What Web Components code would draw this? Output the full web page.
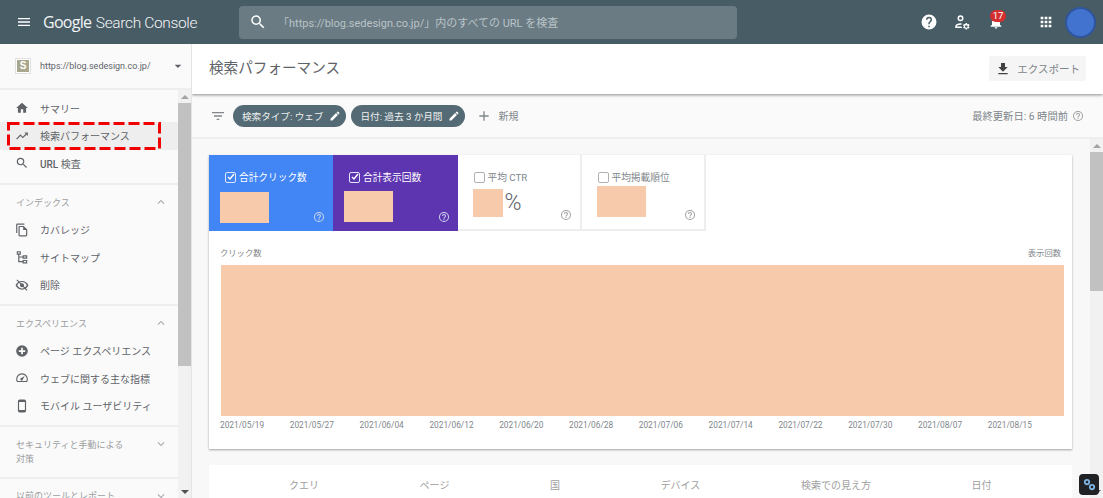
<!DOCTYPE html>
<html lang="ja">
<head>
<meta charset="utf-8">
<title>検索パフォーマンス</title>
<style>
html, body { margin: 0; height: 100%; overflow: hidden; }
body { font-family: Roboto, "Noto Sans CJK JP", sans-serif; color: #5f6368; }
</style>
</head>
<body>
<gsc-app></gsc-app>

<script>
const FONT = 'Roboto, "Noto Sans CJK JP", sans-serif';

const ICONS = {
  menu: '<path d="M3 18h18v-2H3v2zm0-5h18v-2H3v2zm0-7v2h18V6H3z"/>',
  search: '<path d="M15.5 14h-.79l-.28-.27A6.47 6.47 0 0 0 16 9.5 6.5 6.5 0 1 0 9.5 16c1.61 0 3.09-.59 4.23-1.57l.27.28v.79l5 4.99L20.49 19l-4.99-5zm-6 0C7.01 14 5 11.99 5 9.5S7.01 5 9.5 5 14 7.01 14 9.5 11.99 14 9.5 14z"/>',
  help: '<path d="M12 2a10 10 0 1 0 0 20 10 10 0 0 0 0-20zm1 17h-2v-2h2v2zm2.07-7.75-.9.92C13.45 12.9 13 13.5 13 15h-2v-.5c0-1.1.45-2.1 1.17-2.83l1.24-1.26c.37-.36.59-.86.59-1.41a2 2 0 0 0-4 0H8a4 4 0 0 1 8 0c0 .88-.36 1.68-.93 2.25z"/>',
  helpOutline: '<path d="M11 18h2v-2h-2v2zm1-16a10 10 0 1 0 0 20 10 10 0 0 0 0-20zm0 18a8 8 0 1 1 0-16 8 8 0 0 1 0 16zm0-14a4 4 0 0 0-4 4h2a2 2 0 0 1 4 0c0 2-3 1.75-3 5h2c0-2.25 3-2.5 3-5a4 4 0 0 0-4-4z"/>',
  bell: '<path d="M12 22a2 2 0 0 0 2-2h-4a2 2 0 0 0 2 2zm6-6v-5c0-3.07-1.63-5.64-4.5-6.32V4a1.5 1.5 0 0 0-3 0v.68C7.64 5.36 6 7.92 6 11v5l-2 2v1h16v-1l-2-2z"/>',
  apps: '<path d="M4 8h4V4H4v4zm6 12h4v-4h-4v4zm-6 0h4v-4H4v4zm0-6h4v-4H4v4zm6 0h4v-4h-4v4zm6-10v4h4V4h-4zm-6 4h4V4h-4v4zm6 6h4v-4h-4v4zm0 6h4v-4h-4v4z"/>',
  home: '<path d="M10 20v-6h4v6h5v-8h3L12 3 2 12h3v8z"/>',
  trend: '<path d="M16 6l2.29 2.29-4.88 4.88-4-4L2 16.59 3.41 18l6-6 4 4 6.3-6.29L22 12V6z"/>',
  copy: '<path d="M16 1H4a2 2 0 0 0-2 2v14h2V3h12V1zm-1 4H8a2 2 0 0 0-2 2v14c0 1.1.9 2 2 2h11a2 2 0 0 0 2-2V11l-6-6zM8 21V7h6v5h5v9H8z"/>',
  sitemap: '<path d="M3 2h7v6H7.5v3H13V9h8v6h-8v-2H7.5v6H13v-2h8v6h-8v-2H5.5V8H3V2zm2 2v2h3V4H5zm10 7v2h4v-2h-4zm0 8v2h4v-2h-4z"/>',
  eyeOff: '<path d="M12 5C7 5 2.7 8.1 1 12.5 2.7 16.9 7 20 12 20s9.3-3.1 11-7.500C21.300 8.100 17 5 12 5zm0 13c-3.400 0-6.500-2.100-8.200-5.500C5.500 9.100 8.600 7 12 7s6.500 2.100 8.200 5.500C18.500 15.900 15.400 18 12 18zm0-9a3.500 3.500 0 1 0 0 7 3.500 3.500 0 0 0 0-7z"/><path d="M4 2.600 2.600 4l17.400 18 1.400-1.400z"/>',
  plusCircle: '<path fill-rule="evenodd" d="M12 2a10 10 0 1 0 0 20 10 10 0 0 0 0-20zm1.5 4.5h-3v4h-4v3h4v4h3v-4h4v-3h-4v-4z"/>',
  gauge: '<path d="M12 4a10 10 0 0 0-8.66 15h17.32A10 10 0 0 0 12 4zm7.46 13H4.54A8 8 0 0 1 12 6a8 8 0 0 1 7.46 11zM16.5 8.5l-5.6 3.7a2 2 0 1 0 2.2 2.9l3.4-6.6z"/>',
  phone: '<path d="M16 1H8a3 3 0 0 0-3 3v16a3 3 0 0 0 3 3h8a3 3 0 0 0 3-3V4a3 3 0 0 0-3-3zm1 18H7V5h10v14z"/>',
  up: '<path d="M7.41 15.41 12 10.83l4.59 4.58L18 14l-6-6-6 6z"/>',
  down: '<path d="M7.41 8.59 12 13.17l4.59-4.58L18 10l-6 6-6-6z"/>',
  caret: '<path d="M7 10l5 5 5-5z"/>',
  download: '<path d="M19 9h-4V3H9v6H5l7 7 7-7zM5 18v2h14v-2H5z"/>',
  filter: '<path d="M10 18h4v-2h-4v2zM3 6v2h18V6H3zm3 7h12v-2H6v2z"/>',
  pencil: '<path d="M3 17.25V21h3.75L17.81 9.94l-3.75-3.75L3 17.25zM20.71 7.04a1 1 0 0 0 0-1.41l-2.34-2.34a1 1 0 0 0-1.41 0l-1.83 1.83 3.75 3.75 1.83-1.83z"/>',
  plus: '<path d="M19 13h-6v6h-2v-6H5v-2h6V5h2v6h6v2z"/>',
  admin: '<path d="M10 3a4 4 0 1 0 0 8 4 4 0 0 0 0-8zm0 6a2 2 0 1 1 0-4 2 2 0 0 1 0 4zM3 19v-1c0-2.6 4-4.2 7-4.2.5 0 1 .05 1.6.12l-.5 1.96c-.4-.05-.75-.08-1.1-.08-2.4 0-5 1.15-5 2.2h6.4l.6 2H3zm15.8-5.4a.4.4 0 0 0-.4-.35h-1.3a.4.4 0 0 0-.4.35l-.15 1a4 4 0 0 0-.9.52l-.95-.38a.4.4 0 0 0-.48.17l-.65 1.13a.4.4 0 0 0 .1.5l.8.63a3 3 0 0 0 0 1.04l-.8.63a.4.4 0 0 0-.1.5l.65 1.13c.1.17.3.24.48.17l.95-.38c.28.2.58.38.9.52l.15 1c.03.2.2.35.4.35h1.3c.2 0 .37-.15.4-.35l.15-1a4 4 0 0 0 .9-.52l.95.38c.18.07.38 0 .48-.17l.65-1.13a.4.4 0 0 0-.1-.5l-.8-.63a3 3 0 0 0 0-1.04l.8-.63a.4.4 0 0 0 .1-.5l-.65-1.13a.4.4 0 0 0-.48-.17l-.95.38a4 4 0 0 0-.9-.52l-.15-1zm-1.05 6.15a1.75 1.75 0 1 1 0-3.5 1.75 1.75 0 0 1 0 3.5z"/>',
  link: '<path fill-rule="evenodd" d="M8 3a5 5 0 1 0 0 10 5 5 0 0 0 0-10zm0 3a2 2 0 1 1 0 4 2 2 0 0 1 0-4zm8 5a5 5 0 1 0 0 10 5 5 0 0 0 0-10zm0 3a2 2 0 1 1 0 4 2 2 0 0 1 0-4z"/>'
};

function icon(name, size, color) {
  return `<svg width="${size}" height="${size}" viewBox="0 0 24 24" fill="${color || 'currentColor'}" style="display:block;flex:none">${ICONS[name]}</svg>`;
}

class GscIcon extends HTMLElement {
  connectedCallback() {
    const root = this.attachShadow({mode: 'open'});
    const size = this.getAttribute('size') || 24;
    root.innerHTML = `<style>:host { display: block; flex: none; line-height: 0; }</style>` + icon(this.getAttribute('name'), size, this.getAttribute('color'));
  }
}
customElements.define('gsc-icon', GscIcon);

class GscHeader extends HTMLElement {
  constructor() {
    super();
    this.attachShadow({mode: 'open'}).innerHTML = `
    <style>
    :host { display: flex; align-items: center; height: 44px; background: #485c66; color: #fff; flex: none; position: relative; z-index: 3; font-family: ${FONT}; }
    .menu { margin-left: 16px; }
    .logo { margin-left: 11px; width: 172px; flex: none; font-family: Roboto, sans-serif; font-weight: 300; font-size: 15.5px; letter-spacing: -.35px; color: #f2f4f5; white-space: nowrap; }
    .logo b { font-family: "Open Sans", sans-serif; font-weight: 400; font-size: 16px; letter-spacing: -.7px; margin-right: 1px; }
    .search { margin-left: 24px; width: 498px; height: 33px; border-radius: 4px; background: #6b7b83; display: flex; align-items: center; padding-left: 10px; box-sizing: border-box; flex: none; }
    .search span { margin-left: 11px; font-size: 11px; color: #b9c3c8; white-space: nowrap; }
    .right { margin-left: auto; display: flex; align-items: center; height: 100%; }
    .bell { position: relative; margin-left: 17px; }
    .badge { position: absolute; left: 2px; top: -4px; width: 16px; height: 12px; border-radius: 6px; background: #d32f2f; font-size: 9.5px; line-height: 12px; text-align: center; }
    .avatar { width: 31px; height: 31px; box-sizing: border-box; border: 2px solid #2f559f; border-radius: 50%; background: #4274cf; margin: 0 7px 0 11px; }
    </style>
    <gsc-icon class="menu" name="menu" size="16"></gsc-icon>
    <div class="logo"><b>Google</b> Search Console</div>
    <div class="search"><gsc-icon name="search" size="18" color="#fff"></gsc-icon><span>「https://blog.sedesign.co.jp/」内のすべての URL を検査</span></div>
    <div class="right">
      <gsc-icon name="help" size="18"></gsc-icon>
      <gsc-icon name="admin" size="18" style="margin-left:15px"></gsc-icon>
      <div class="bell"><gsc-icon name="bell" size="16"></gsc-icon><div class="badge">17</div></div>
      <gsc-icon name="apps" size="16" style="margin-left:34px"></gsc-icon>
      <div class="avatar"></div>
    </div>`;
  }
}
customElements.define('gsc-header', GscHeader);

class GscNavItem extends HTMLElement {
  connectedCallback() {
    const root = this.attachShadow({mode: 'open'});
    root.innerHTML = `
    <style>
    :host { display: flex; align-items: center; height: 27.5px; padding-left: 15px; font-size: 10px; color: #5f6368; white-space: nowrap; }
    :host([active]) { background: #eeeeee; }
    span { margin-left: 11px; }
    </style>
    <gsc-icon name="${this.getAttribute('icon')}" size="14"></gsc-icon><span><slot></slot></span>`;
  }
}
customElements.define('gsc-nav-item', GscNavItem);

class GscNavGroup extends HTMLElement {
  connectedCallback() {
    const root = this.attachShadow({mode: 'open'});
    const open = this.hasAttribute('open');
    root.innerHTML = `
    <style>
    :host { display: block; border-top: 2px solid #eeeeee; }
    :host([open]) { padding-bottom: 5.5px; }
    .head { display: flex; justify-content: space-between; align-items: flex-start; padding: 10px 10px 0 16px; font-size: 9px; line-height: 14px; color: #9a9da0; box-sizing: border-box; }
    .head.open { height: 31px; }
    .head.closed { padding-bottom: 11px; }
    .head div { width: 112px; padding-top: .5px; }
    </style>
    <div class="head ${open ? 'open' : 'closed'}"><div>${this.getAttribute('label')}</div><gsc-icon name="${open ? 'up' : 'down'}" size="14" color="#a8abae"></gsc-icon></div>
    <slot></slot>`;
  }
}
customElements.define('gsc-nav-group', GscNavGroup);

class GscScrollbar extends HTMLElement {
  connectedCallback() {
    const root = this.attachShadow({mode: 'open'});
    root.innerHTML = `
    <style>
    :host { display: flex; flex-direction: column; width: 13px; flex: none; background: #f1f1f1; }
    .arrow { height: 13px; flex: none; display: flex; align-items: center; justify-content: center; }
    .arrow i { display: block; width: 0; height: 0; border-left: 4px solid transparent; border-right: 4px solid transparent; }
    .up i { border-bottom: 4px solid #a3a3a3; }
    .down i { border-top: 4px solid #505050; }
    .thumb { height: ${this.getAttribute('thumb-height')}px; background: #c1c1c1; flex: none; }
    .track { flex: 1; }
    </style>
    <div class="arrow up"><i></i></div><div class="thumb"></div><div class="track"></div><div class="arrow down"><i></i></div>`;
  }
}
customElements.define('gsc-scrollbar', GscScrollbar);

class GscSidebar extends HTMLElement {
  constructor() {
    super();
    this.attachShadow({mode: 'open'}).innerHTML = `
    <style>
    :host { display: flex; flex-direction: column; width: 192px; flex: none; background: #fafafa; border-right: 1px solid #e4e4e4; box-sizing: border-box; font-family: ${FONT}; position: relative; z-index: 2; }
    .prop { display: flex; align-items: center; height: 44px; flex: none; padding: 0 5px 0 15px; border-bottom: 2px solid #eeeeee; font-size: 9px; color: #5f6368; }
    .fav { width: 16px; height: 16px; border: 1px solid #e0e0e0; background: #fff; display: flex; align-items: center; justify-content: center; flex: none; box-sizing: border-box; }
    .fav i { display: block; width: 12px; height: 12px; background: #a9a78d; color: #fff; font: 700 10px/12px "Liberation Sans", sans-serif; text-align: center; }
    .url { margin-left: 9px; }
    .caret { margin-left: auto; }
    .body { flex: 1; display: flex; min-height: 0; }
    .list { flex: 1; min-width: 0; overflow: hidden; padding-top: 4.5px; }
    .first { padding-bottom: 6px; }
    </style>
    <div class="prop">
      <div class="fav"><i>S</i></div>
      <span class="url">https://blog.sedesign.co.jp/</span>
      <gsc-icon class="caret" name="caret" size="16"></gsc-icon>
    </div>
    <div class="body">
      <div class="list">
        <div class="first">
          <gsc-nav-item icon="home">サマリー</gsc-nav-item>
          <gsc-nav-item icon="trend" active>検索パフォーマンス</gsc-nav-item>
          <gsc-nav-item icon="search"><b style="font-weight:500">URL</b> 検査</gsc-nav-item>
        </div>
        <gsc-nav-group label="インデックス" open>
          <gsc-nav-item icon="copy">カバレッジ</gsc-nav-item>
          <gsc-nav-item icon="sitemap">サイトマップ</gsc-nav-item>
          <gsc-nav-item icon="eyeOff">削除</gsc-nav-item>
        </gsc-nav-group>
        <gsc-nav-group label="エクスペリエンス" open>
          <gsc-nav-item icon="plusCircle">ページ エクスペリエンス</gsc-nav-item>
          <gsc-nav-item icon="gauge">ウェブに関する主な指標</gsc-nav-item>
          <gsc-nav-item icon="phone">モバイル ユーザビリティ</gsc-nav-item>
        </gsc-nav-group>
        <gsc-nav-group label="セキュリティと手動による対策"></gsc-nav-group>
        <gsc-nav-group label="以前のツールとレポート"></gsc-nav-group>
      </div>
      <gsc-scrollbar thumb-height="263"></gsc-scrollbar>
    </div>`;
  }
}
customElements.define('gsc-sidebar', GscSidebar);

class GscChip extends HTMLElement {
  connectedCallback() {
    const root = this.attachShadow({mode: 'open'});
    root.innerHTML = `
    <style>
    :host { display: inline-flex; align-items: center; height: 22px; padding: 0 5px 0 9px; border-radius: 11px; background: #546b75; color: #fff; font-size: 9.6px; white-space: nowrap; }
    span { margin-right: 6px; opacity: .9; }
    </style>
    <span><slot></slot></span><gsc-icon name="pencil" size="12"></gsc-icon>`;
  }
}
customElements.define('gsc-chip', GscChip);

class GscMetric extends HTMLElement {
  connectedCallback() {
    const root = this.attachShadow({mode: 'open'});
    const on = this.hasAttribute('checked');
    const mask = this.getAttribute('mask').split(',');
    root.innerHTML = `
    <style>
    :host { display: block; width: 124.5px; height: 76px; box-sizing: border-box; position: relative; font-size: 9.7px; color: #80868b; background: #fff; border-right: 2px solid #eeeeee; border-bottom: 2px solid #eeeeee; }
    :host([checked]) { color: #fff; border: 0; background: var(--bg); }
    .top { display: flex; align-items: center; padding: 15px 0 0 16px; height: 14px; }
    .box { width: 11px; height: 11px; box-sizing: border-box; border: 1px solid ${on ? '#dfe7fb' : '#b0b0b0'}; border-radius: 2px; margin-right: 3px; display: flex; align-items: center; justify-content: center; }
    .box svg { display: ${on ? 'block' : 'none'}; }
    .value { margin: ${mask[1]}px 0 0 ${mask[0]}px; display: flex; align-items: center; font-size: 23px; font-weight: 300; line-height: 28px; color: #5f6368; }
    .value i { display: block; width: ${mask[2]}px; height: ${mask[3]}px; background: #f6caab; margin-right: 2px; }
    .help { position: absolute; right: 8px; bottom: 8px; }
    </style>
    <div class="top"><div class="box"><svg width="8" height="8" viewBox="0 0 8 8"><path d="M1 4l2 2 4-5" fill="none" stroke="#fff" stroke-width="1.4"/></svg></div><slot></slot></div>
    <div class="value"><i></i>${this.getAttribute('unit') || ''}</div>
    <gsc-icon class="help" name="helpOutline" size="12" color="${on ? '#cfd8f0' : '#9e9e9e'}"></gsc-icon>`;
  }
}
customElements.define('gsc-metric', GscMetric);

class GscChart extends HTMLElement {
  constructor() {
    super();
    const dates = ['2021/05/19','2021/05/27','2021/06/04','2021/06/12','2021/06/20','2021/06/28','2021/07/06','2021/07/14','2021/07/22','2021/07/30','2021/08/07','2021/08/15'];
    this.attachShadow({mode: 'open'}).innerHTML = `
    <style>
    :host { display: block; width: 863px; height: 294px; background: #fff; flex: none; box-shadow: 0 1px 2px rgba(0,0,0,.35); font-family: ${FONT}; }
    .metrics { display: flex; }
    .labels { display: flex; justify-content: space-between; padding: 16px 11px 0 11px; font-size: 8.3px; line-height: 12px; color: #80868b; height: 18px; }
    .plot { margin: 0 8px 0 12px; height: 151px; background: #f6caab; }
    .dates { display: flex; justify-content: space-between; width: 812px; margin: 3px 0 0 11px; font-size: 8.3px; line-height: 12px; color: #80868b; }
    </style>
    <div class="metrics">
      <gsc-metric checked mask="11,8,49,31" style="--bg:#4285f4;width:124px">合計クリック数</gsc-metric>
      <gsc-metric checked mask="11,7,49,31" style="--bg:#5e35b1">合計表示回数</gsc-metric>
      <gsc-metric mask="15,5,30,28" unit="%" style="width:124px">平均 CTR</gsc-metric>
      <gsc-metric mask="15,2,49,31">平均掲載順位</gsc-metric>
    </div>
    <div class="labels"><span>クリック数</span><span>表示回数</span></div>
    <div class="plot"></div>
    <div class="dates">${dates.map(d => `<span>${d}</span>`).join('')}</div>`;
  }
}
customElements.define('gsc-chart', GscChart);

class GscTabs extends HTMLElement {
  constructor() {
    super();
    const tabs = ['クエリ','ページ','国','デバイス','検索での見え方','日付'];
    this.attachShadow({mode: 'open'}).innerHTML = `
    <style>
    :host { display: flex; gap: 100.6px; width: 863px; flex: none; height: 60px; margin-top: 16px; background: #fff; font-family: ${FONT}; font-size: 10px; line-height: 14px; color: #9e9e9e; padding: 14px 0 0 80px; box-sizing: border-box; }
    span:first-child { color: #4a4a4a; }
    </style>
    ${tabs.map(t => `<span>${t}</span>`).join('')}`;
  }
}
customElements.define('gsc-tabs', GscTabs);

class GscMain extends HTMLElement {
  constructor() {
    super();
    this.attachShadow({mode: 'open'}).innerHTML = `
    <style>
    :host { display: flex; flex-direction: column; flex: 1; min-width: 0; font-family: ${FONT}; position: relative; }
    .title { display: flex; align-items: center; justify-content: space-between; height: 50px; flex: none; padding: 0 17px; background: #fff; box-shadow: 0 1px 3px rgba(0,0,0,.45); position: relative; z-index: 1; }
    h1 { margin: 0 0 5px; font-size: 14.6px; font-weight: 400; color: #5f6368; }
    .export { display: flex; align-items: center; height: 25px; padding: 0 6px; margin-bottom: 1px; background: #f5f5f5; border-radius: 2px; font-size: 10.5px; color: #80868b; }
    .export span { margin-left: 6px; }
    .filters { display: flex; align-items: center; height: 43px; flex: none; padding: 0 19px 0 18px; background: #fafafa; border-bottom: 2px solid #eeeeee; font-size: 10px; color: #80868b; box-sizing: content-box; }
    gsc-chip { margin-right: 5px; }
    .fi { margin-right: 7px; }
    .plus { margin: 0 6px; }
    .updated { margin-left: auto; display: flex; align-items: center; gap: 4px; font-size: 10.3px; }
    .body { flex: 1; display: flex; min-height: 0; background: #f8f8f8; }
    .scroll { flex: 1; min-width: 0; overflow: hidden; padding: 16px 0 0 17px; display: flex; flex-direction: column; }
    </style>
    <div class="title">
      <h1>検索パフォーマンス</h1>
      <div class="export"><gsc-icon name="download" size="16" color="#424242"></gsc-icon><span>エクスポート</span></div>
    </div>
    <div class="filters">
      <gsc-icon class="fi" name="filter" size="16"></gsc-icon>
      <gsc-chip>検索タイプ: ウェブ</gsc-chip>
      <gsc-chip>日付: 過去 3 か月間</gsc-chip>
      <gsc-icon class="plus" name="plus" size="16"></gsc-icon>
      <span>新規</span>
      <div class="updated">最終更新日: 6 時間前 <gsc-icon name="helpOutline" size="12" color="#9e9e9e"></gsc-icon></div>
    </div>
    <div class="body">
      <div class="scroll">
        <gsc-chart></gsc-chart>
        <gsc-tabs></gsc-tabs>
      </div>
      <gsc-scrollbar thumb-height="139"></gsc-scrollbar>
    </div>`;
  }
}
customElements.define('gsc-main', GscMain);

class GscApp extends HTMLElement {
  constructor() {
    super();
    this.attachShadow({mode: 'open'}).innerHTML = `
    <style>
    :host { display: flex; flex-direction: column; height: 498px; overflow: hidden; position: relative; }
    .row { flex: 1; display: flex; min-height: 0; }
    /* annotation drawn on top of the screenshot */
    .mark { position: absolute; left: 7px; top: 122px; z-index: 5; display: block; }
    .ext { position: absolute; right: 4px; bottom: 3px; width: 20px; height: 21px; border-radius: 4px; background: #202124; display: flex; align-items: center; justify-content: center; z-index: 5; }
    </style>
    <gsc-header></gsc-header>
    <div class="row"><gsc-sidebar></gsc-sidebar><gsc-main></gsc-main></div>
    <svg class="mark" width="154" height="28"><rect x="1.5" y="1.500" width="151" height="25" fill="none" stroke="#f00000" stroke-width="3" stroke-dasharray="11 4"/></svg>
    <div class="ext"><gsc-icon name="link" size="15" color="#7cb0de"></gsc-icon></div>`;
  }
}
customElements.define('gsc-app', GscApp);
</script>
</body>
</html>
